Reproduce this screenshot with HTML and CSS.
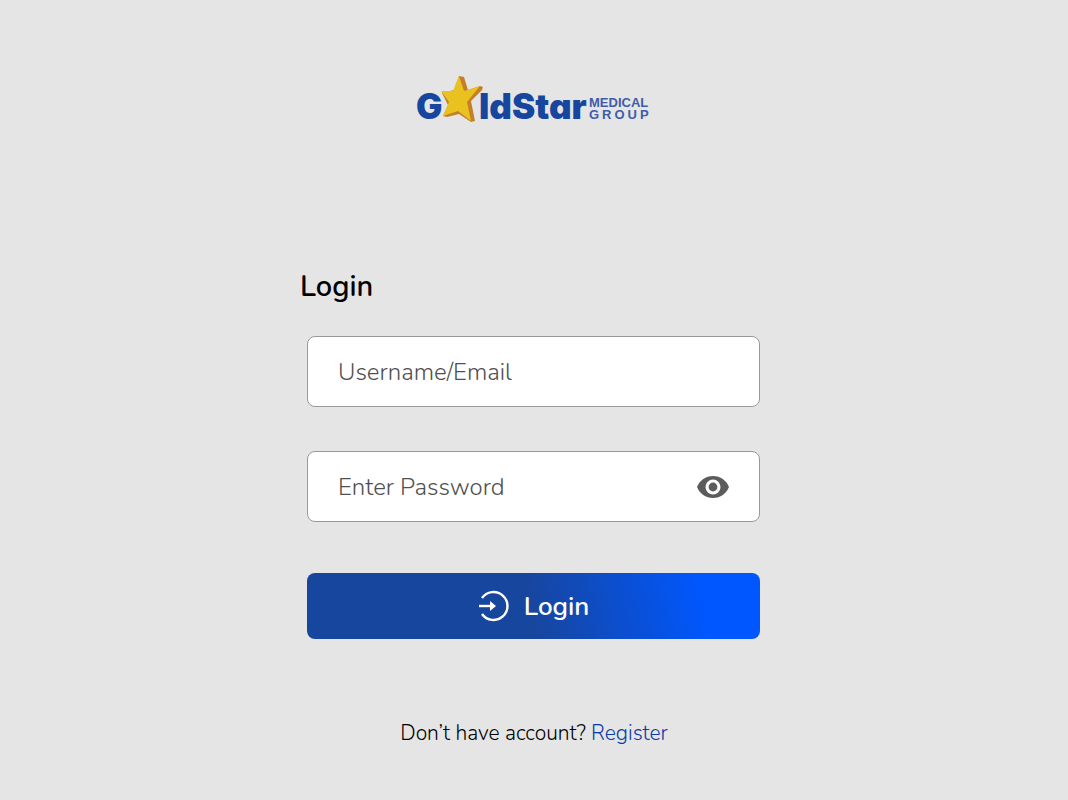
FILE: index.html
```html
<!DOCTYPE html>
<html lang="en">
<head>
    <meta charset="UTF-8">
    <meta name="viewport" content="width=device-width, initial-scale=1.0">
    <title>GoldStar Medical Group - Login</title>
    <link rel="stylesheet" href="styles.css">
</head>
<body>
    <header class="logo">
        <svg width="236" height="52" viewBox="0 0 236 52" role="img" aria-label="GoldStar Medical Group">
            <text class="logo-name" x="0" y="45">G</text>
            <text class="logo-name" x="63" y="45">ldStar</text>
            <text class="logo-group" x="173" y="33">MEDICAL</text>
            <text class="logo-group logo-group-wide" x="173" y="45">GROUP</text>
            <path fill="#c47f2a" d="M43 2 L48 3 L52 16 L64 12 L67 13 L66 16 L55 27 L59 47 L55 48 L43 40 L31 43 L27 42 L32 31 L26 19 L38 16 Z"/>
            <path fill="#e9c220" d="M43 2 L48 17 L64 12 L51 28 L55 47 L42 37 L27 42 L33 28 L25 17 L37 17 Z"/>
        </svg>
    </header>

    <main class="login">
        <h1>Login</h1>
        <form class="login-form">
            <div class="field">
                <input type="text" id="username" placeholder="Username/Email" aria-label="Username/Email">
            </div>
            <div class="field">
                <input type="password" id="password" placeholder="Enter Password" aria-label="Enter Password">
                <button type="button" class="toggle-password" aria-label="Show password">
                    <svg width="32" height="22" viewBox="0 0 32 22">
                        <path fill="#5c5c5c" d="M16 0C8.700 0 2.500 4.500 0 11c2.500 6.500 8.700 11 16 11s13.500-4.500 16-11C29.500 4.500 23.300 0 16 0z"/>
                        <circle cx="16" cy="11" r="7.500" fill="#fff"/>
                        <circle cx="16" cy="11" r="4.400" fill="#5c5c5c"/>
                    </svg>
                </button>
            </div>
            <button type="submit" class="login-button">
                <svg width="32" height="32" viewBox="0 0 32 32" fill="none" stroke="#fff" stroke-width="2.400">
                    <path d="M4 8A14 14 0 1 1 4 24"/>
                    <path d="M1 16h13"/>
                    <path fill="#fff" stroke="none" d="M12 11l6 5-6 5z"/>
                </svg>
                <span>Login</span>
            </button>
        </form>
        <p class="register">Don’t have account? <a href="#">Register</a></p>
    </main>

    <script>
        const passwordInput = document.getElementById('password');
        const toggleButton = document.querySelector('.toggle-password');

        toggleButton.addEventListener('click', function() {
            passwordInput.type = passwordInput.type === 'password' ? 'text' : 'password';
        });
    </script>
</body>
</html>
```
FILE: styles.css
```css
* {
    box-sizing: border-box;
}

body {
    margin: 0;
    padding: 74px 20px 40px;
    background-color: #e5e5e5;
    font-family: Nunito, "Open Sans", sans-serif;
    color: #000;
}

.logo {
    display: flex;
    justify-content: center;
}

.logo svg {
    overflow: visible;
}

.logo-name {
    font-family: Inter, sans-serif;
    font-size: 35px;
    font-weight: 900;
    font-feature-settings: "cv11";
    fill: #17469f;
}

.logo-group {
    font-family: "Liberation Sans", Arial, sans-serif;
    font-size: 13px;
    font-weight: bold;
    fill: #3e5cab;
}

.logo-group-wide {
    letter-spacing: 3px;
}

.login {
    max-width: 468px;
    margin: 141px auto 0;
}

h1 {
    margin: 0;
    font-size: 29px;
    line-height: 40px;
    font-weight: 600;
}

.login-form {
    display: flex;
    flex-direction: column;
    gap: 44px;
    padding: 0 8px 0 7px;
    margin-top: 29px;
}

.field {
    display: flex;
    align-items: center;
    height: 71px;
    padding: 0 30px;
    background-color: #fff;
    border: 1px solid #999;
    border-radius: 8px;
}

.field input {
    flex: 1;
    min-width: 0;
    height: 100%;
    padding: 0;
    border: none;
    outline: none;
    background: none;
    font-family: inherit;
    font-size: 24px;
    font-weight: 300;
}

.field input::placeholder {
    color: #505050;
    opacity: 1;
}

.toggle-password {
    display: flex;
    padding: 0;
    border: none;
    background: none;
    cursor: pointer;
}

.login-button {
    display: flex;
    align-items: center;
    justify-content: center;
    gap: 14px;
    height: 66px;
    margin-top: 7px;
    border: none;
    border-radius: 8px;
    background: linear-gradient(80deg, #17469f 50%, #0057ff 87%);
    color: #fff;
    font-family: inherit;
    font-size: 26px;
    font-weight: 600;
    cursor: pointer;
}

.register {
    margin: 79px 0 0;
    font-size: 21px;
    line-height: 30px;
    font-weight: 300;
    text-align: center;
}

.register a {
    color: #0b3aa9;
    text-decoration: none;
}
```
